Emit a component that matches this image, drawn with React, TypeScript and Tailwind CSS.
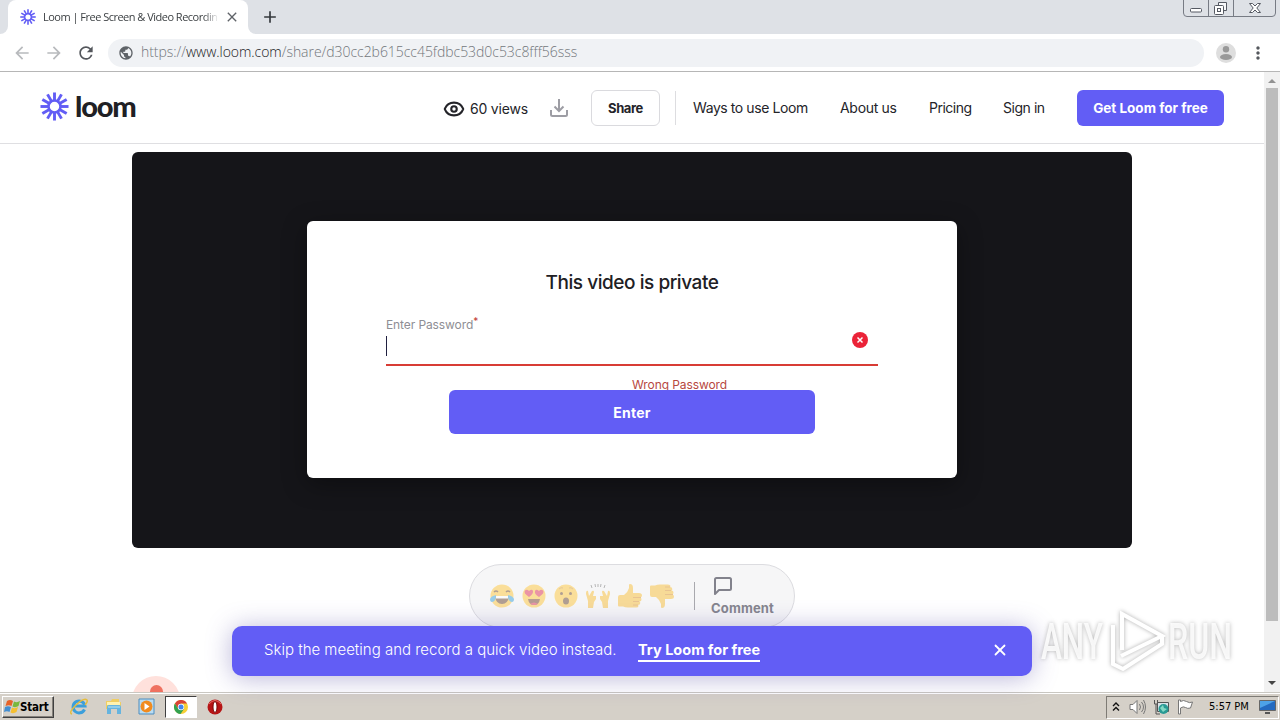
import { Eye, X } from "lucide-react";
import { MdArrowBack, MdArrowForward, MdRefresh, MdPublic, MdAdd, MdClose, MdMoreVert } from "react-icons/md";
import React from "react";

const navLinks = [
  { label: "Ways to use Loom", className: "w-[115px] tracking-[-0.42px]" },
  { label: "About us", className: "w-[57px] tracking-[-0.3px]" },
  { label: "Pricing", className: "w-[42px] tracking-[-0.5px]" },
  { label: "Sign in", className: "w-[42px] tracking-[-0.45px]" },
];

const rays = [0, 30, 60, 90, 120, 150, 180, 210, 240, 270, 300, 330];

const LoomMark = ({ className }: { className: string }) => (
  <svg viewBox="0 0 30 30" className={className}>
    {rays.map((angle) => (
      <path
        key={angle}
        d="M15 .5v9"
        stroke="#625df5"
        strokeWidth="3"
        transform={`rotate(${angle} 15 15)`}
      />
    ))}
    <circle cx="15" cy="15" r="6.200" fill="none" stroke="#625df5" strokeWidth="2.600" />
  </svg>
);

const WindowControls = () => (
  <svg width="93" height="17" viewBox="0 0 93 17" fill="none" stroke="#777b84">
    <path d="M.5 0v13q0 3.500 3.500 3.500h85q3.500 0 3.500-3.500V0M25.500 0v16M50.500 0v16" />
    <g stroke="#555962">
      <rect x="7.500" y="8.500" width="11" height="3.500" rx="1" fill="#fff" />
      <path d="M35.500 5V2.500h8v8H41" fill="#f7f8fa" />
      <rect x="31.500" y="5.500" width="9" height="9" rx="1" fill="#fff" />
      <rect x="34.500" y="8.500" width="3" height="3" />
      <path d="M66.500 3.500h3l2.500 2.500 2.500-2.500h3L73.800 8l3.700 4.500h-3L72 10l-2.500 2.500h-3L70.200 8z" fill="#fff" />
    </g>
  </svg>
);

const BrowserChrome = () => (
  <div className="shrink-0">
    <div className="flex h-[34px] bg-[#dee1e6]">
      <div className="flex w-2 items-end bg-white">
        <div className="h-full w-full rounded-br-lg bg-[#dee1e6]" />
      </div>
      <div className="flex w-60 items-center rounded-t-lg bg-white pl-3">
        <LoomMark className="h-4 w-4 shrink-0" />
        <div className="ml-[7px] w-[176px] whitespace-nowrap font-['Open_Sans',sans-serif] text-[11px] leading-4 tracking-[-0.51px] text-[#3c4043] [mask-image:linear-gradient(to_right,black_91%,transparent)]">
          Loom | Free Screen &amp; Video Recordin
        </div>
        <MdClose className="ml-[5px] h-4 w-4 shrink-0 text-[#5f6368]" />
      </div>
      <div className="w-2 bg-white">
        <div className="h-full w-full rounded-bl-lg bg-[#dee1e6]" />
      </div>
      <MdAdd className="ml-[4px] mt-[7px] h-5 w-5 text-[#34383d]" />
      <div className="ml-auto mr-[4px]">
        <WindowControls />
      </div>
    </div>
    <div className="flex h-[38px] items-center border-b border-[#b6b6b6] bg-white">
      <MdArrowBack className="ml-[12px] h-5 w-5 text-[#b8babd]" />
      <MdArrowForward className="ml-[12px] h-5 w-5 text-[#b8babd]" />
      <MdRefresh className="ml-[12px] h-5 w-5 text-[#54575c]" />
      <div className="ml-3 flex h-7 w-[1096px] items-center rounded-full bg-[#f0f2f5] pl-[10px]">
        <MdPublic className="h-4 w-4 text-[#5f6368]" />
        <div className="-mt-[2px] ml-[7px] whitespace-nowrap font-['Open_Sans',sans-serif] text-[14px] font-light tracking-[-0.045px] text-[#72767b]">
          https://<span className="text-[#202124]">www.loom.com</span>/share/d30cc2b615cc45fdbc53d0c53c8fff56sss
        </div>
      </div>
      <svg width="20" height="20" viewBox="0 0 20 20" className="ml-3">
        <circle cx="10" cy="10" r="10" fill="#dedede" />
        <circle cx="10" cy="6.300" r="3.200" fill="#999" />
        <ellipse cx="10" cy="14" rx="6" ry="3" fill="#999" />
      </svg>
      <MdMoreVert className="ml-[12px] h-5 w-5 text-[#55585d]" />
    </div>
  </div>
);

const Header = () => (
  <header className="flex h-[72px] shrink-0 items-center border-b border-[#dfdfe2] bg-white pl-10 text-[14px] text-[#242429]">
    <LoomMark className="-mt-[2px] h-[29px] w-[29px]" />
    <span className="-mt-[3px] ml-[6px] w-[62px] whitespace-nowrap font-['Lato',sans-serif] text-[29px] font-black leading-[30px] tracking-[-1.200px] text-[#202024]">
      loom
    </span>
    <Eye className="ml-[306px] mt-[2px] h-[22px] w-[22px]" strokeWidth={2.3} />
    <span className="ml-[5px] mt-[2px] w-[58px] whitespace-nowrap tracking-[-0.2px]">60 views</span>
    <svg width="20" height="20" viewBox="0 0 20 20" fill="none" stroke="#9d9da4" strokeWidth="2" className="ml-[21px]">
      <path d="M10 1v12M5.500 8.500 10 13l4.500-4.500M2 12v4.500q0 1.500 1.500 1.500h13q1.500 0 1.500-1.500V12" />
    </svg>
    <button className="ml-[22px] h-9 w-[69px] rounded-md border border-[#dadade] pt-[2px] text-[13px] font-bold tracking-[-0.4px]">Share</button>
    <div className="ml-[15px] h-[34px] w-px bg-[#dddde0]" />
    <nav className="ml-[17px] flex gap-8">
      {navLinks.map((link) => (
        <a key={link.label} className={`whitespace-nowrap ${link.className}`}>
          {link.label}
        </a>
      ))}
    </nav>
    <button className="ml-8 h-9 w-[147px] whitespace-nowrap rounded-md bg-[#625df5] pt-px text-[13.500px] font-bold text-white">
      Get Loom for free
    </button>
  </header>
);

const PasswordCard = () => (
  <div className="mt-[69px] flex h-[257px] w-[650px] flex-col items-center rounded-md bg-white shadow-[0_6px_24px_rgba(0,0,0,0.35)]">
    <h1 className="mt-[49px] whitespace-nowrap text-[19px] font-medium leading-[26px] tracking-[-0.450px] text-[#202024]">This video is private</h1>
    <div className="mt-[19px] flex h-[51px] w-[492px] justify-between border-b-2 border-[#d83c35]">
      <div>
        <div className="flex h-[21px] whitespace-nowrap text-[12px] leading-[19px] tracking-[-0.1px] text-[#8e8e94]">
          Enter Password<sup className="top-0 text-[10px] leading-[13px] text-[#c23a33]">*</sup>
        </div>
        <div className="h-5 w-px bg-[#202040]" />
      </div>
      <svg width="16" height="16" viewBox="0 0 16 16" className="mr-[10px] mt-[17px]">
        <circle cx="8" cy="8" r="8" fill="#eb2338" />
        <path d="m5.500 5.500 5 5m0-5-5 5" stroke="#fff" strokeWidth="1.500" />
      </svg>
    </div>
    <div className="ml-[95px] mt-[10px] h-[14px] whitespace-nowrap text-[12px] leading-[18px] tracking-[-0.1px] text-[#b7483f]">Wrong Password</div>
    <button className="z-10 h-11 w-[366px] shrink-0 rounded-md bg-[#625df5] text-[14px] font-bold tracking-[0.2px] text-white">Enter</button>
  </div>
);

const Face = ({ children }: { children: React.ReactNode }) => (
  <svg width="24" height="24" viewBox="0 0 24 24" fill="none">
    <circle cx="12" cy="12" r="11.500" fill="#ffc83d" />
    {children}
  </svg>
);

// Thumb and fist, flipped for the thumbs-down reaction
const Hand = ({ down }: { down?: boolean }) => (
  <svg width="24" height="24" viewBox="0 0 24 24" className={down ? "-scale-y-100" : ""}>
    <path
      d="M0 13q0-2 2-2h4q4-3 5-7V1q0-1 1-1 3 0 3 4v5h6q3 0 3 2.500 0 1.500-1.500 2 1 .5 1 2 0 1.800-2 2 .8.5.8 1.500 0 1.800-2.300 2 .5.500.500 1 0 1.500-2.500 1.500h-8q-3 0-5-1H1q-1 0-1-1z"
      fill="#f9c03a"
    />
    <path d="M15 13.500h8M15 17.500h6M15 21h5" stroke="#dc922d" fill="none" />
  </svg>
);

const Reactions = () => (
  <div className="flex gap-2 opacity-50">
    <Face>
      <path d="M4 8q2-2 4 0m8 0q2-2 4 0" stroke="#6c4931" strokeWidth="1.500" />
      <path d="M5 12h14q-1 8-7 8t-7-8" fill="#6c4931" />
      <path d="M6 12h12v2.500H6z" fill="#fff" />
      <path d="M0 15q1-3 6-4 0 7-4 7-2 0-2-3m24 0q-1-3-6-4 0 7 4 7 2 0 2-3" fill="#3aa3df" />
    </Face>
    <Face>
      <path d="M7 13Q1 9 3 6.500 5 5 7 7q3-2.500 4 0 .5 3-4 6m10 0q-5-3-4-6 1-2.500 4 0 2-2 4-.5 2 2.500-4 6.500" fill="#e03558" />
      <path d="M6 15h12q-1 6-6 6t-6-6" fill="#7a4430" />
      <path d="M8 20q4-3 8 0-4 2-8 0" fill="#e03558" />
    </Face>
    <Face>
      <circle cx="7.500" cy="9.500" r="1.500" fill="#6c4931" />
      <circle cx="16.500" cy="9.500" r="1.500" fill="#6c4931" />
      <path d="M5 5q2-2 4-1m6 0q2-1 4 1" stroke="#d49a3b" />
      <ellipse cx="12" cy="17" rx="3" ry="3.500" fill="#6c4931" />
    </Face>
    <svg width="24" height="24" viewBox="0 0 24 24" fill="#f9c03a">
      <path d="M0 10q0-4 2-3l1 5 3-5q2-1 2 1l-1 4h3v3l-2 3-1 6H2v-7zM24 10q0-4-2-3l-1 5-3-5q-2-1-2 1l1 4h-3v3l2 3 1 6h5v-7z" />
      <path d="m5 1 1 3m3-4 .5 3M12 0v3m3-3-.5 3M19 1l-1 3" stroke="#777" />
    </svg>
    <Hand />
    <Hand down />
  </div>
);

const CommentBar = () => (
  <div className="mt-4 flex h-[64px] w-[326px] shrink-0 items-center rounded-full border border-[#dcdce0] bg-[#f6f6f7] pl-5">
    <Reactions />
    <div className="ml-5 h-7 w-px bg-[#a9a9ae]" />
    <div className="ml-[16px] mt-px flex flex-col">
      <svg width="20" height="20" viewBox="0 0 20 20" fill="none" stroke="#82828c" strokeWidth="2" strokeLinejoin="round" className="ml-[2px]">
        <path d="M2 18V3.500Q2 2 3.500 2h13Q18 2 18 3.500v9q0 1.500-1.500 1.500H6z" />
      </svg>
      <span className="mt-[3px] text-[13px] font-bold leading-[18px] tracking-[0.15px] text-[#85858e]">Comment</span>
    </div>
  </div>
);

const PromoBanner = () => (
  <div className="absolute left-[232px] top-[626px] flex h-[50px] w-[800px] items-center rounded-[10px] bg-[#625df5] pb-[2px] pl-8 text-white shadow-[0_2px_26px_rgba(80,70,160,0.4)]">
    <span className="w-[353px] whitespace-nowrap text-[15px] font-light">Skip the meeting and record a quick video instead.</span>
    <a className="ml-[21px] mt-px w-[122px] whitespace-nowrap border-b-2 border-white text-[14.500px] font-bold leading-[20px]">
      Try Loom for free
    </a>
    <X className="ml-[231px] h-[18px] w-[18px]" strokeWidth={2.4} />
  </div>
);

const Watermark = () => (
  <svg
    width="242"
    height="76"
    viewBox="0 0 242 76"
    className="absolute left-[1036px] top-[605px] drop-shadow-[0_0_2px_rgba(90,90,90,0.5)]"
    fill="#fff"
    fillOpacity=".85"
  >
    <text x="5" y="54" textLength="62" lengthAdjust="spacingAndGlyphs" className="font-['Roboto',sans-serif] text-[50px] font-medium">ANY</text>
    <text x="132" y="54" textLength="64" lengthAdjust="spacingAndGlyphs" className="font-['Roboto',sans-serif] text-[50px] font-medium">RUN</text>
    <g fill="none" stroke="#fff" strokeWidth="4">
      <path d="M86 45V9l40 22-41 20" />
      <path d="M77 20v39l10 5 39-25v-8" />
    </g>
  </svg>
);

const ScrollBar = () => (
  <div className="flex w-4 shrink-0 flex-col items-center bg-[#f1f1f1]">
    <svg width="16" height="16" viewBox="0 0 16 16" fill="#929292">
      <path d="m4 11 4-4 4 4z" />
    </svg>
    <div className="h-[533px] w-3 bg-[#bcbcbc]" />
    <svg width="16" height="16" viewBox="0 0 16 16" fill="#454545" className="mt-auto">
      <path d="m4 5 4 4 4-4z" />
    </svg>
  </div>
);

const WindowsFlag = () => (
  <svg width="16" height="16" viewBox="0 0 16 16" className="shrink-0">
    <path d="M3 2q3-2 6 0L7.500 7Q5 5.500 1.500 7z" fill="#e76228" />
    <path d="M10 2.500q3 1.500 6-.5L14.500 7q-3 2-6 .5z" fill="#79b83d" />
    <path d="M1 8q3-1.500 6 0l-1.500 5Q3 11.500 0 13z" fill="#438ed1" />
    <path d="M8 8.500q3 1.500 6-.5l-1.500 5q-3 2-6 .5z" fill="#f5bf30" />
  </svg>
);

const Taskbar = () => (
  <footer className="flex h-7 shrink-0 items-center border-t border-[#c9c7c1] bg-[#d5d0c8] shadow-[inset_0_1px_0_#fff] font-['DejaVu_Sans_Condensed','DejaVu_Sans',sans-serif] text-[11px] text-black">
    <div className="ml-[2px] mt-px flex h-[22px] w-[52px] items-center border border-b-[#404040] border-l-white border-r-[#404040] border-t-white pl-px shadow-[inset_-1px_-1px_0_#85817b]">
      <WindowsFlag />
      <span className="mt-px whitespace-nowrap text-[11.500px] font-bold tracking-[-0.2px]">Start</span>
    </div>
    <svg width="18" height="18" viewBox="0 0 18 18" fill="none" className="ml-[16px]">
      <path d="M14.500 11.500A6 6 0 1 1 15 8H5" stroke="#3c9fdb" strokeWidth="3" />
      <path d="M2 16q-4-1 4-9t11-5q1 2-2 5" stroke="#e6bd3d" strokeWidth="1.500" />
    </svg>
    <svg width="17" height="17" viewBox="0 0 17 17" className="ml-[17px]">
      <path d="M1 3h5l1-2h7v3h2v7H1z" fill="#f0ce62" />
      <path d="M2 4h13v3H2z" fill="#fff2b0" />
      <path d="M2 16V9q0-2 2-2h10q2 0 2 2v7h-4v-5H6v5z" fill="#66b4df" />
      <path d="M3 9h12" stroke="#b9e4f6" />
    </svg>
    <svg width="17" height="17" viewBox="0 0 17 17" className="ml-[16px]">
      <path d="M1 1h15v15H1z" fill="#b9dcf2" stroke="#4d8dbf" />
      <circle cx="8.500" cy="8.500" r="6" fill="#f18b1e" />
      <path d="m6.500 5 5 3.500-5 3.500z" fill="#fff" />
    </svg>
    <div className="ml-[10px] mt-px flex h-[22px] w-[32px] items-center justify-center border border-b-white border-l-[#404040] border-r-white border-t-[#404040] bg-white">
      <svg width="14" height="14" viewBox="0 0 14 14">
        <circle cx="7" cy="7" r="7" fill="#f7cf35" />
        <path d="M.9 3.500A7 7 0 0 1 13.100 3.500H7L4 8.500z" fill="#d94336" />
        <path d="M.9 3.500A7 7 0 0 0 6.500 14l3.500-5-6-.5z" fill="#32a150" />
        <circle cx="7" cy="7" r="3.200" fill="#fff" />
        <circle cx="7" cy="7" r="2.500" fill="#4285ed" />
      </svg>
    </div>
    <svg width="16" height="16" viewBox="0 0 16 16" className="ml-[10px]">
      <circle cx="8" cy="8" r="7.500" fill="#b61415" />
      <path d="M2 5q6-7 12 0" stroke="#e76b65" fill="none" />
      <ellipse cx="8" cy="8" rx="2" ry="5.500" fill="#fff" stroke="#760809" />
    </svg>
    <div className="ml-auto mr-px mt-px flex h-[23px] w-[173px] items-center border border-b-white border-l-[#7e7b75] border-r-white border-t-[#7e7b75]">
      <svg width="8" height="10" viewBox="0 0 8 10" fill="none" stroke="#111" strokeWidth="1.400" className="ml-[5px]">
        <path d="m1 4 3-3 3 3M1 8.500l3-3 3 3" />
      </svg>
      <svg width="17" height="16" viewBox="0 0 17 16" fill="none" stroke="#777" className="ml-[9px]">
        <path d="M1 5.500h3l4-4v13l-4-4H1z" fill="#fff" />
        <path d="M10.500 5q2 3 0 6m2-8q4 5 0 10m2-12q4 7 0 14" />
      </svg>
      <svg width="17" height="16" viewBox="0 0 17 16" fill="none" className="ml-[7px]">
        <path d="M4.500 3.500h11v9h-11z" fill="#d9e3e8" stroke="#555" />
        <path d="M1.500 1v4h3V1M3 5v10h4" stroke="#555" />
        <circle cx="10.500" cy="10" r="5" fill="#299a94" />
        <path d="m7 9 3-3 1 3 3 1-4 3z" fill="#84d9c4" />
      </svg>
      <svg width="17" height="16" viewBox="0 0 17 16" fill="#fff" stroke="#777" className="ml-[7px]">
        <path d="M1.500 15V1h2v1.500q3-2 6 0t6 .5l-2 6q-3 1-5-.5t-5 .5v6z" />
      </svg>
      <span className="ml-[15px] mt-px w-[41px] whitespace-nowrap">5:57 PM</span>
      <svg width="17" height="14" viewBox="0 0 17 14" className="ml-[9px]">
        <path d="M.5.500h16v10H.500z" fill="#246ac0" stroke="#666" />
        <path d="M1 1h15L1 8z" fill="#4da2e8" />
        <path d="M6 13h5" stroke="#555" strokeWidth="2" />
      </svg>
    </div>
  </footer>
);

const App = () => {
  return (
    <div className="relative flex h-[720px] w-[1280px] flex-col overflow-hidden bg-white font-['Inter',sans-serif]">
      <BrowserChrome />
      <div className="flex min-h-0 flex-1">
        <div className="flex w-[1264px] flex-col overflow-hidden">
          <Header />
          <main className="flex flex-col items-center pt-2">
            <div className="flex h-[396px] w-[1000px] shrink-0 justify-center rounded-md bg-[#151519]">
              <PasswordCard />
            </div>
            <CommentBar />
            <div className="-ml-[952px] mt-[48px] flex h-12 w-12 shrink-0 items-start justify-center rounded-full bg-[#ffe1dc] pt-[9px]">
              <div className="h-[13px] w-[13px] rounded-full bg-[#ef7160]" />
            </div>
          </main>
        </div>
        <ScrollBar />
      </div>
      <Taskbar />
      <PromoBanner />
      <Watermark />
    </div>
  );
};

export default App;
